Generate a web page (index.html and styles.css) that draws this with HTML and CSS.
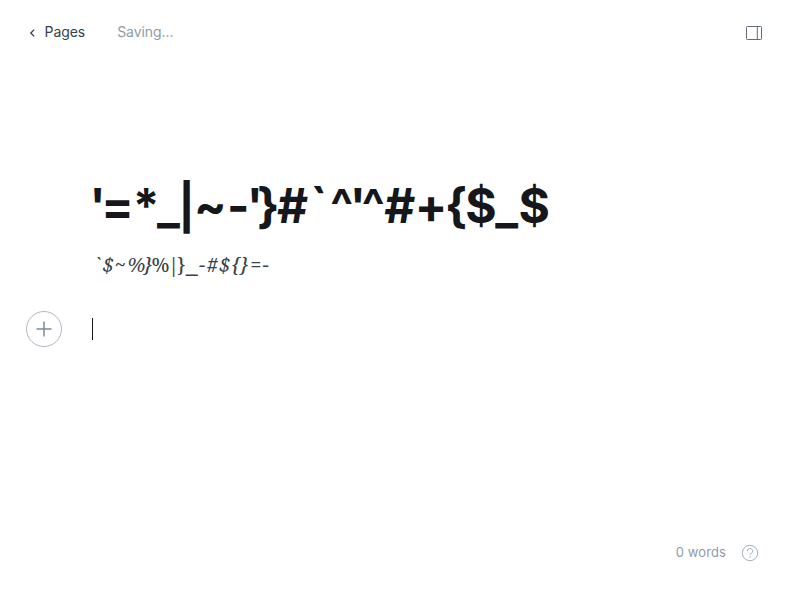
FILE: index.html
```html
<!DOCTYPE html>
<html lang="en">
<head>
<meta charset="utf-8">
<title>Editor</title>
<link rel="stylesheet" href="styles.css">
</head>
<body>
<div class="editor">
  <header class="bar">
    <a class="back"><svg width="7" height="8" viewBox="0 0 7 8"><path d="M5.200 .6 1.800 4l3.400 3.400" stroke-width="1.300"/></svg><span>Pages</span></a>
    <span class="status">Saving...</span>
    <button class="toggle" aria-label="Settings"><svg width="16" height="14" viewBox="0 0 16 14"><rect x=".5" y=".5" width="15" height="13" rx=".8"/><path d="M11.300 .5v13"/></svg></button>
  </header>
  <main class="content">
    <h1 class="title"><span class="k1">'</span><span class="k2">=</span><span class="k3">*</span><span class="k14">_</span><span class="pipe">|</span><span class="k4">~</span><span class="k5">-</span><span class="k6">'</span><span class="k5">}</span><span class="k7">#</span><span class="k8">`</span><span class="k9">^</span><span class="k10">'</span><span class="k11">^</span><span class="k12">#</span><span class="k3">+</span><span class="k13">{</span>$<span class="k4">_</span>$</h1>
    <p class="excerpt"><em><span class="s5">`</span><span class="s2">$</span><span class="s3">~</span><span class="n3">%</span><span class="n2">}</span></em><span class="n3">%</span><span class="n4">|</span>}<span class="rule">_</span><em><span class="s3">-</span><span class="s2">#$</span><span class="s1">{</span><span class="s3">}</span></em><span class="s2">=</span>-</p>
    <div class="block">
      <button class="plus" aria-label="Add a card"><svg width="16" height="16" viewBox="0 0 16 16"><path d="M8 .5v15M.5 8h15"/></svg></button>
      <span class="caret"></span>
    </div>
  </main>
  <footer class="foot">
    <span>0 words</span>
    <svg width="18" height="18" viewBox="0 0 18 18"><circle cx="9" cy="9" r="7.700"/><path d="M6.300 7.200a2.700 2.600 0 1 1 3.800 2.300c-.8.300-1.100.6-1.100 1.400"/><circle class="dot" cx="9" cy="13" r=".8"/></svg>
  </footer>
</div>
</body>
</html>
```
FILE: styles.css
```css
* { box-sizing: border-box; }
body { margin: 0; background: #fff; color: #15171a; font-family: Inter, sans-serif; }
svg { display: block; fill: none; stroke: currentColor; }
button { border: 0; padding: 0; background: none; color: inherit; }
.editor { height: 600px; display: flex; flex-direction: column; }
.bar { height: 65px; padding: 0 38px 0 29px; display: flex; align-items: center; font-size: 14px; letter-spacing: -.06px; }
.bar span { position: relative; top: -1px; }
.back { display: flex; align-items: center; gap: 8.500px; color: #394047; }
.status { margin-left: 32px; color: #8e9ca9; }
.toggle { margin-left: auto; color: #626d79; }
.content { flex: 1; padding: 110px 92px 0; }
.title { margin: 0 0 0 -2.500px; height: 62px; font-size: 48px; line-height: 62px; font-weight: 700; letter-spacing: -1.600px; white-space: nowrap; font-feature-settings: "calt" 0; }

.k1 { letter-spacing: -4.600px; }
.k2 { letter-spacing: -1.100px; }
.k3 { letter-spacing: -2.600px; }
.k4 { letter-spacing: .4px; }
.k5 { letter-spacing: -2.600px; }
.k6 { letter-spacing: -6.100px; }
.k7 { letter-spacing: 1.900px; }
.k8 { letter-spacing: 2.400px; }
.k9 { letter-spacing: -3.600px; }
.k10 { letter-spacing: -4.600px; }
.k11 { letter-spacing: -.6px; }
.k12 { letter-spacing: -.6px; }
.k13 { letter-spacing: -1.900px; }
.k14 { letter-spacing: -1.600px; }
.pipe { font-size: 45px; letter-spacing: -.9px; }

.excerpt { margin: 12px 0 0 2.500px; height: 32px; font-family: "Noto Serif", Georgia, serif; font-size: 20px; line-height: 32px; color: #394047; white-space: nowrap; }

.s1 { letter-spacing: .5px; }
.s2 { letter-spacing: 1px; }
.s3 { letter-spacing: 1.500px; }
.s5 { letter-spacing: 2.500px; }
.n2 { letter-spacing: -1px; }
.n3 { letter-spacing: -1.500px; }
.n4 { letter-spacing: -2px; }
.rule { font-size: 26px; line-height: 1; letter-spacing: 1.500px; }

.block { margin: 30px 0 0 -66px; display: flex; align-items: center; gap: 30px; }
.plus { width: 36px; height: 36px; border: 1px solid #aeb7c1; border-radius: 50%; display: flex; align-items: center; justify-content: center; color: #7c8b9a; }
.plus svg { stroke-width: 1.500; }
.caret { width: 1px; height: 22px; background: #15171a; }
.foot { height: 94px; padding: 0 41px 0 0; display: flex; justify-content: flex-end; align-items: center; gap: 15px; font-size: 13px; letter-spacing: .1px; color: #8e9ca9; }
.foot svg { color: #a3afbb; }
.foot span { position: relative; top: -1px; }
.dot { fill: currentColor; stroke: none; }
```
